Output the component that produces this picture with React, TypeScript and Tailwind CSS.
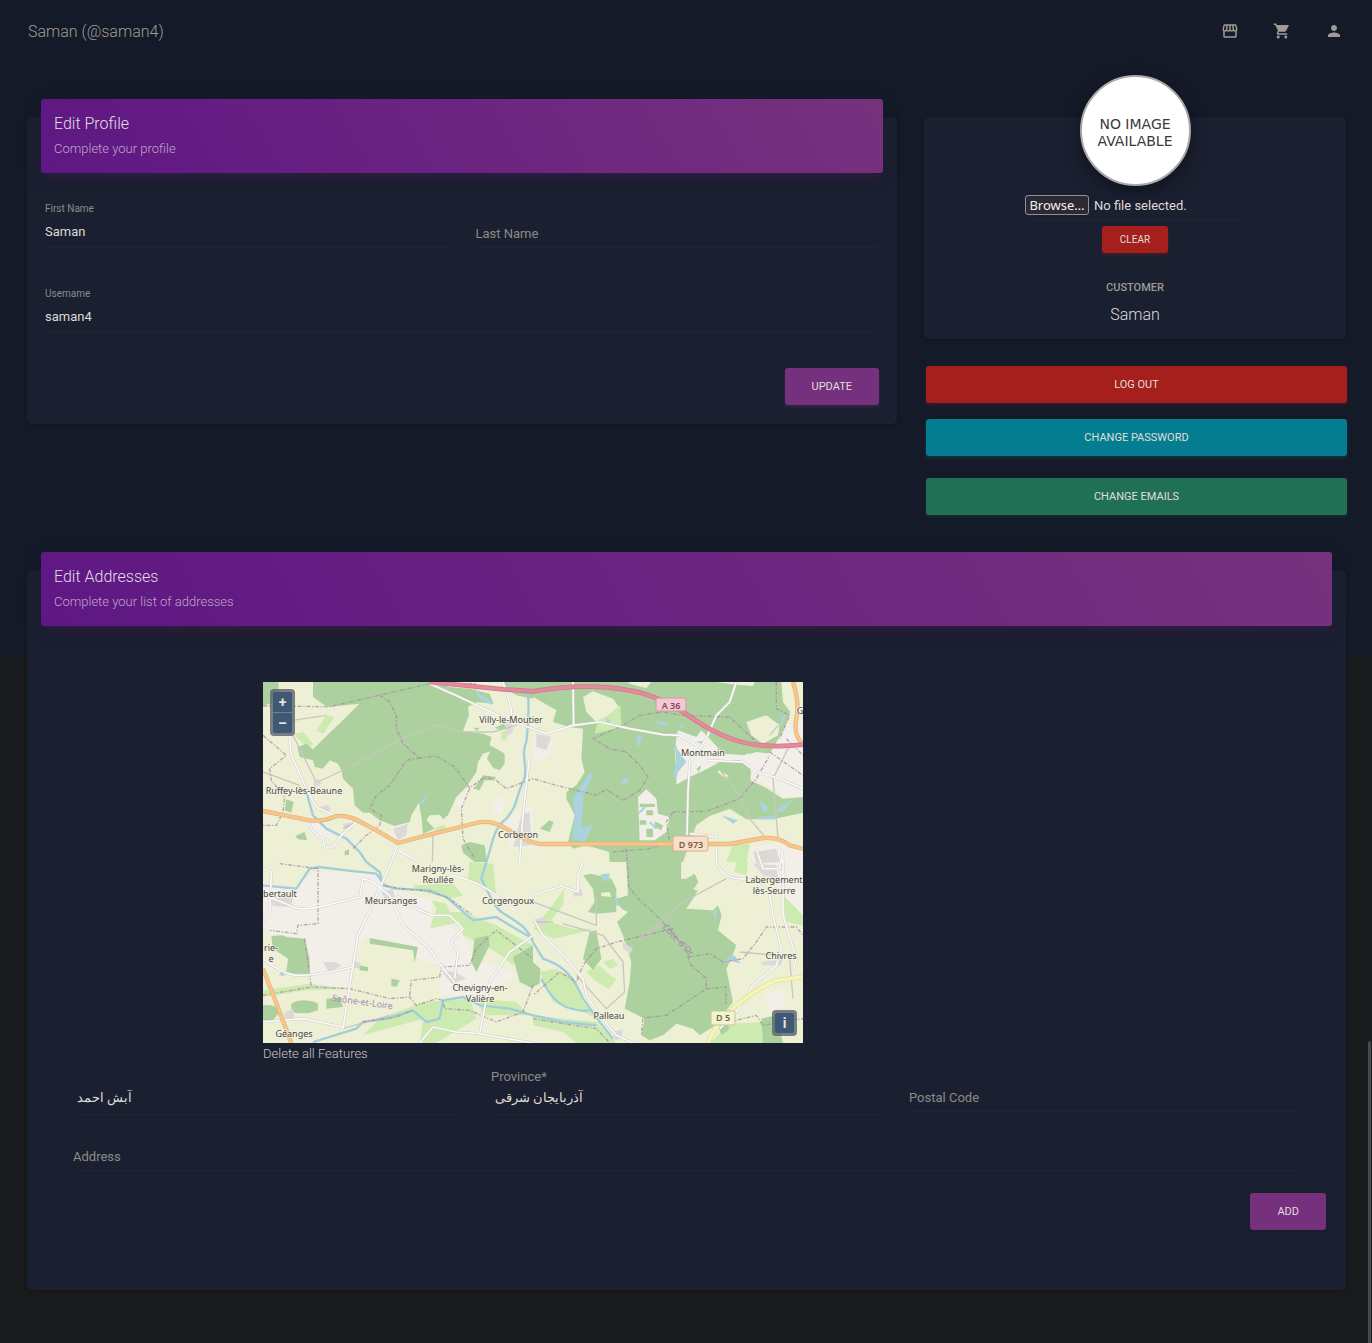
import React from 'react';
import { MdOutlineStorefront, MdPerson, MdShoppingCart } from 'react-icons/md';

function CardHeader({ title, subtitle }: { title: string; subtitle: string }) {
  return (
    <header className="mx-[14px] -mt-[18px] h-[74px] rounded-[3px] bg-[linear-gradient(60deg,#5f1784,#76327d)] px-[13px] pt-[14px] shadow-[0_4px_20px_rgba(0,0,0,0.14),0_7px_10px_-5px_rgba(122,30,138,0.4)]">
      <h4 className="text-[16px] leading-[22px] font-light text-[#e3dfe5]">{title}</h4>
      <p className="mt-[4px] text-[13px] leading-[20px] font-light text-[#c0a6c9]">{subtitle}</p>
    </header>
  );
}

function Card({ className = '', children }: { className?: string; children: React.ReactNode }) {
  return (
    <section className={`rounded-[5px] bg-[#1b2031] shadow-[0_1px_4px_rgba(0,0,0,0.2)] ${className}`}>{children}</section>
  );
}

function WideButton({ className, children }: { className: string; children: React.ReactNode }) {
  return (
    <button type="button" className={`h-[37px] w-full rounded-[3px] pt-[2px] text-[11px] text-[#e0dedb] uppercase ${className}`}>
      {children}
    </button>
  );
}

const field = 'w-full border-b border-[#1f2538] bg-transparent text-[13px] text-[#dedbd7] outline-none';

type LabelSpec = { x: number; y: number; lines: string[] };

const places: LabelSpec[] = [
  { x: 248, y: 41, lines: ['Villy-le-Moutier'] },
  { x: 440, y: 74, lines: ['Montmain'] },
  { x: 41, y: 112, lines: ['Ruffey-lès-Beaune'] },
  { x: 255, y: 156, lines: ['Corberon'] },
  { x: 175, y: 190, lines: ['Marigny-lès-', 'Reullée'] },
  { x: 128, y: 222, lines: ['Meursanges'] },
  { x: 245, y: 222, lines: ['Corgengoux'] },
  { x: 511, y: 201, lines: ['Labergement', 'lès-Seurre'] },
  { x: 17, y: 215, lines: ['bertault'] },
  { x: 8, y: 269, lines: ['rie-', 'e'] },
  { x: 518, y: 277, lines: ['Chivres'] },
  { x: 217, y: 309, lines: ['Chevigny-en-', 'Valière'] },
  { x: 346, y: 337, lines: ['Palleau'] },
  { x: 31, y: 355, lines: ['Géanges'] },
  { x: 537, y: 32, lines: ['G'] },
];

const forest = [
  'M0 0H47V60L20 66 0 70Z',
  'M150 0H500L560 15 620 20 680 35 692 65 640 60 615 75 618 100 600 147 660 155 685 165 680 190 700 200 725 215 725 245 710 265 690 257 672 230 682 208 660 215 645 240 640 270 610 315 580 345 555 400 540 412 530 398 500 400 490 415 515 440 480 455 476 410 468 362 445 400 440 420 395 432 350 415 320 392 300 392 275 370 270 320 240 290 235 265 225 245 200 235 180 260 155 255 150 235 110 225 103 195 130 185 150 202 290 65 200 74 185 70 150 45Z',
  'M720 0H810V50L760 40 720 15Z',
  'M70 352L92 360 85 392 65 385Z M97 462L125 450 132 475 105 472Z M595 490L620 480 665 490 672 540H635L600 512Z M245 508L258 502 258 518 245 520Z',
  'M640 310L660 280 700 285 690 295 665 295 650 325 630 320Z M632 137L650 137 640 147Z M695 137L720 125 735 135 710 145Z',
  'M810 0H1555L1560 60 1582 90 1550 175 1550 205 1510 215 1450 215 1430 235 1465 260 1462 295 1510 318 1560 350 1620 345V392L1530 412 1450 412 1400 380 1340 402 1300 430 1290 455 1255 470 1254 620 1305 625 1290 650 1270 680 1350 685 1365 670 1376 700 1365 745 1420 790 1405 830 1390 860 1410 960 1350 1035 1310 1060 1290 1040 1240 1025 1200 1060 1160 1075 1135 1060 1145 1010 1085 980 1100 900 1105 840 1080 760 1062 720 1095 690 1075 680 1060 650 1095 640 1090 540H1040L1038 510 970 490 930 500 915 480 935 400 910 350 910 330 940 310 965 270 955 230 960 140 920 135 870 120 880 85 820 50 810 45Z',
  'M25 762L60 760 70 765 125 770 140 830 140 875 100 882 70 870 75 830 30 800Z',
  'M85 965Q120 945 165 965V985Q130 1000 85 990Z M190 950L230 945 240 975 190 980Z M0 970Q40 965 50 990L30 1015 0 1015Z',
  'M320 768L465 795 455 842 450 805 320 785Z M288 850L315 855V868L290 865Z M385 890L410 895 400 915 385 912Z',
  'M635 770L675 760 680 790 640 870 625 840Z M750 825L810 790V920L770 900Z M810 840L832 860 830 905 810 915Z',
  'M985 575L1045 590 1060 620 1060 690 1000 695 975 690 995 660 990 620 960 580Z M980 750L1000 745 1015 830 990 865 960 830Z',
  'M1495 1010L1540 1000 1560 1083H1500Z M1365 1030L1390 1020 1400 1040 1375 1060Z M830 440L860 415 872 420 860 450Z',
  'M1250 540V470L1290 455 1260 540Z M1254 540L1250 620 1290 625 1306 600 1295 575 1270 590 1252 590Z',
];

const farmland = [
  'M960 45L990 28 1050 50 1072 80 1040 110 1000 120 970 90Z',
  'M1450 120L1510 100 1550 130 1545 160 1500 185 1465 160Z',
  'M1095 0H1165L1150 18 1100 5Z M1360 0H1475L1470 12 1420 8Z',
  'M1405 590L1420 645 1360 660Z',
  'M1015 632L1040 630 1045 645 1015 642Z',
  'M1365 265L1395 280 1390 290 1365 272Z',
];

const built = [
  'M1245 145L1300 165 1315 145 1340 170 1380 215 1450 220 1480 210 1520 215 1570 130 1620 110V345L1560 345 1530 320 1470 292 1460 255 1430 235 1370 240 1330 262 1280 285 1240 308 1240 260 1235 200Z',
  'M0 600L90 620 150 570 340 575 380 620 470 645 510 655 500 720 560 730 600 760 640 840 700 850 760 880 660 940H530V850L470 830 420 790 300 765 270 860 260 915H140L130 770 20 755 0 730Z',
  'M700 345L725 340 715 400 690 390Z M760 390L810 370V500L740 500 720 430Z M385 435L440 415 435 470 380 465Z M570 370L605 330 600 375Z',
  'M1125 345L1150 322 1180 350 1185 395 1220 405 1210 450 1175 475 1130 475Z',
  'M1450 500L1560 480 1620 510V700L1560 670 1540 600 1490 560Z M1505 940L1560 920 1570 970 1520 985Z',
  'M810 150L870 160 860 220 810 240Z M130 425L185 420 220 470 150 460Z M560 850H620V930H540Z',
];

const meadow = [
  'M190 100L215 105 180 155 160 145Z M95 155L120 150 150 185 135 200 100 165Z M715 150L735 145 730 175 715 175Z',
  'M1072 70L1075 135 995 155 1005 115 1035 100Z M520 435L545 430 550 440 515 455Z M1410 490L1460 485 1450 540H1390Z',
  'M505 655L550 665 560 690 600 690 700 730 810 790 750 850 700 810 600 760 590 720 500 740 520 680Z M620 540L690 545 700 640 660 620 615 590Z M450 610L570 605 600 640 560 650 460 625Z',
  'M640 950L760 960 800 1000 660 1000Z M0 925L140 905 260 920 130 925 0 945Z',
  'M860 680L890 640 905 620 900 670 860 720 930 740 1000 740 870 770 810 740Z M830 870L880 860 930 890 960 960 1000 1010 940 980 870 960Z M810 1000L1000 1020 1060 1083H940L900 1050 810 1030Z',
  'M970 870L1010 850 1040 880 1060 890 1040 920 1000 900Z M1020 840L1050 830 1065 850 1040 860Z M1560 640L1620 700V730L1570 720Z',
  'M350 1010L480 960 620 950 640 1010 520 1083H470L480 1010 300 1060Z M1400 1025L1500 1020 1500 1083H1340Z M1420 540H1455L1450 580 1415 570Z',
];

const water = [
  'M980 272L990 278 962 340 958 400 955 440 992 425 965 480 928 470 935 400 930 350Z',
  'M1122 160L1138 162 1130 192 1122 190Z M1180 115L1215 125 1210 135 1182 122Z M1233 165L1242 200 1270 240 1245 270 1240 290 1230 280 1240 240Z M1075 292L1095 285 1092 305 1078 305Z M1250 130L1265 122 1260 137Z',
  'M1375 400L1425 415 1410 425Z M1490 355L1515 375 1510 392 1495 380Z M1480 405L1545 398 1535 412 1490 412Z M1300 178L1325 178 1318 188Z M1540 385L1590 350 1560 390Z M1570 90L1560 120 1545 140 1560 100Z',
  'M1013 577L1040 575 1038 595 1020 598Z M1053 628L1068 665 1072 675 1060 670Z M1350 685L1360 680 1362 710 1352 705Z M1370 840L1415 820 1432 845 1400 835 1365 845Z',
  'M630 15L655 40 690 60 685 68 650 50Z M495 335L480 365 470 360Z M1030 108L1042 115 1035 130Z M48 880L58 865 65 882Z',
];

const rivers = [
  'M795 30Q800 100 790 180C770 220 800 260 780 300C760 340 765 370 730 410C690 440 690 480 670 540L655 590C680 640 690 670 715 690C760 720 790 730 810 780L840 830C900 850 930 880 960 950L1010 1020 1050 1070',
  'M130 330L150 400 190 440 250 470 290 510 310 540 350 570 360 610 400 620 500 625 550 645 590 680 630 715 700 705 740 730 810 770',
  'M0 610L100 620 140 560 170 555 250 565 340 575 365 610',
  'M150 1080L280 1040 300 1020 370 1010 450 985 490 1020 530 1010 540 955 600 945 650 970 740 980 810 1000 900 1020 1000 1030',
  'M835 890Q870 960 910 975T980 985',
];

const borders = [
  'M0 72L200 74 500 5 640 5',
  'M350 40L380 60 400 100 400 140 420 185 470 228 520 222 575 255 620 318 665 285 700 295 730 320 810 290 880 310 1000 340 1030 322 1080 355 1130 325 1155 285 1130 250 1090 210 1040 200 990 170 1080 130 1130 100 1200 90 1260 100 1400 105 1480 180',
  'M470 228L430 235 380 310 340 340 320 380 355 400 350 430 310 460 270 500',
  'M620 320L595 380 600 470 635 530',
  'M0 160L70 220 20 260 25 295 65 345 60 390 40 430 0 430',
  'M50 545L165 560 165 725 105 730 100 755 20 745',
  'M125 770L145 915 260 920 380 950 440 945 460 970 520 950 540 955 545 980 620 985 700 1020 780 990 810 910',
  'M0 940L145 915M440 940L445 895 530 885 535 855 620 850 640 800 700 745 810 830',
  'M1090 500L1098 615 1125 650 1190 710 1270 800 1280 845 1330 890 1330 920 1210 1000 1140 1008 1135 1060',
  'M1230 740L1060 780 1000 800 960 850 940 900 890 870 810 940',
  'M1230 390L1210 420 1220 480 1160 500 1050 510M1230 390L1330 388 1430 350 1480 290 1520 220',
  'M1275 825L1340 815 1380 840 1440 830 1480 780 1510 735 1600 735 1620 760',
  'M1330 920L1390 915 1388 965M1400 1020L1480 1000 1500 1030 1620 1010',
  'M300 1020L400 1005 450 985M810 1010L900 1025 1000 1040 1040 1083',
  'M365 610L400 618 500 628 560 650 600 680 630 700',
  'M1540 0V80L1580 100 1550 170M1520 210L1620 280M1570 170L1620 220',
];

const minorRoads = [
  'M500 5Q580 40 600 50T740 115L850 155 930 130 1010 120 1100 140 1200 158 1250 160 1300 190',
  'M720 0L745 80 745 110M930 0L932 130M1420 0L1400 60 1360 100 1330 170 1310 200 1280 240 1275 330 1272 460',
  'M90 90Q75 170 85 220L130 320 160 375 210 400M135 420Q150 460 180 470L185 495 210 495 235 460 285 415',
  'M405 485L385 540 350 620 285 760 265 880 240 1040M405 505L460 535M800 220L780 400 770 540',
  'M0 560L25 570 20 700 0 720M0 640Q60 660 90 675T210 665L290 645 300 590 330 600 380 640 420 730 500 800 540 860 575 900',
  'M400 640Q470 690 510 700L560 700 600 740 565 780 585 810 575 890',
  'M0 830Q60 880 110 880T270 855M0 1020L120 1010 240 1035',
  'M810 760L740 810 680 900 650 1055M570 580Q650 600 700 640L760 690M470 1083L510 1035 580 1050 650 1055 810 1083',
  'M810 710L840 760 900 820 960 890 970 940 1010 1000 1060 1060 1110 1083M810 640L895 612 945 630 945 580 960 540',
  'M1360 540Q1380 590 1430 590T1520 640L1530 700 1555 800 1540 850 1470 910 1420 990 1370 1040',
  'M1560 530L1560 700 1600 830 1590 870M1480 500L1500 560 1550 560 1560 500',
  'M1330 235L1440 240 1480 270 1550 290 1620 320M1280 455L1360 465 1360 540',
];

const tracks = [
  'M165 300L260 255 410 175 520 128 600 150 690 150 760 130',
  'M90 115L190 100M90 160L160 300M240 440L290 415M510 460L508 540M0 270L110 310',
  'M1375 270L1430 340 1460 410 1510 470M1580 190L1530 290 1545 470',
  'M1390 590L1260 660 1130 770M900 725L1020 760 1080 840 1085 930 1030 980 940 880M810 660L1000 730 1000 640M1520 160L1545 130',
  'M810 720L870 720M1140 770L1230 700M240 1040L380 1000M1580 830L1590 950M1430 810L1540 820',
];

function Paths({ list, ...props }: { list: string[] } & React.SVGProps<SVGGElement>) {
  return (
    <g {...props}>
      {list.map((d) => (
        <path key={d} d={d} />
      ))}
    </g>
  );
}

const motorway = 'M500 0L640 14 720 22 810 28Q900 12 990 14C1110 18 1180 40 1260 90C1350 150 1430 210 1620 188';
const primary = 'M0 387L140 415Q180 420 220 402C270 400 290 420 340 445L405 483 500 458 640 423Q680 412 720 435L800 478 830 486H1400L1500 468Q1550 465 1580 490L1620 500';
const secondary = 'M1335 1083Q1360 1020 1420 970T1540 895L1620 885';
const sideRoads = 'M0 860L35 950 85 1083M1590 0Q1610 60 1600 110T1620 185';

function RegionMap() {
  return (
    <svg viewBox="0 0 540 361" className="block h-full w-full" role="img" aria-label="Map around Corberon">
      <rect width="540" height="361" fill="#eef0d5" />
      <g transform="scale(0.33333)" strokeLinejoin="round">
        <Paths list={built} fill="#f2efe9" />
        <Paths list={meadow} fill="#cdebb0" />
        <Paths list={forest} fill="#add19e" />
        <Paths list={farmland} fill="#eef0d5" />
        <Paths list={[built[0], built[3]]} fill="#f2efe9" />
        <path d={meadow[1]} fill="#cdebb0" />
        <path d="M1130 365H1175V375H1130ZM1150 385H1170V400H1150ZM1130 415H1150V428H1130ZM1175 418L1200 430 1195 445 1175 435ZM1150 440H1170V465H1150ZM1300 260L1315 250 1308 270Z" fill="#add19e" />
        <path d="M1125 395L1150 372M1160 420L1180 440" stroke="#aad3df" strokeWidth="6" />
        <Paths list={water} fill="#aad3df" />
        <g fill="#dcdad6">
          <path d="M725 120L745 105 750 150 730 165ZM775 400L800 390 805 490 750 495ZM390 440L435 425 430 460 405 475ZM150 300L165 290 175 305 155 318ZM165 375L195 368 205 385 175 390ZM240 425L275 420 265 440 245 440Z" />
          <path d="M20 650L90 645 85 675 30 672ZM180 840L215 840 235 850 200 875ZM270 835L295 845 285 860 268 855ZM535 865L575 870 610 890 565 905ZM355 630L390 620 395 645 370 660ZM65 990L90 980 95 1010 65 1010Z" />
          <path d="M820 155L865 165 850 205 820 195ZM930 635L955 620 960 640 935 645ZM1080 780L1110 800 1100 815 1080 800ZM1050 1050L1080 1040 1075 1070 1055 1075ZM1495 840L1560 830 1555 850 1500 850ZM1470 510L1540 500 1550 540 1480 545ZM1470 545L1540 550 1545 590 1500 580ZM810 715L840 705 850 730 815 730Z" />
        </g>
        <Paths list={rivers} fill="none" stroke="#a0cedb" strokeWidth="7" />
        <Paths list={tracks} fill="none" stroke="#c9c6c1" strokeWidth="4" />
        <Paths list={borders} fill="none" stroke="#a58ba3" strokeWidth="4" strokeDasharray="12 5 4 5" opacity="0.75" />
        <Paths list={minorRoads} fill="none" stroke="#cfccc7" strokeWidth="8" />
        <Paths list={minorRoads} fill="none" stroke="#fbfbfa" strokeWidth="5" />
        <g fill="none">
          <path d={secondary} stroke="#dcdb98" strokeWidth="14" />
          <path d={secondary} stroke="#f4f5b6" strokeWidth="11" />
          <path d={primary} stroke="#e5b274" strokeWidth="13" />
          <path d={primary} stroke="#f7c68c" strokeWidth="9" />
          <path d={sideRoads} stroke="#e5b274" strokeWidth="13" />
          <path d={sideRoads} stroke="#f7c68c" strokeWidth="9" />
          <path d={motorway} stroke="#d67488" strokeWidth="14" />
          <path d={motorway} stroke="#e28b9e" strokeWidth="10" />
        </g>
      </g>
      <g strokeWidth="1">
        <rect x="393" y="16" width="30" height="13" rx="2" fill="#f0c9d2" stroke="#dd93a4" />
        <rect x="410" y="154" width="35" height="15" rx="2" fill="#f7e0ca" stroke="#d9b08d" />
        <rect x="448" y="329" width="24" height="14" rx="2" fill="#f3f2d3" stroke="#c9c790" />
      </g>
      <g fontFamily='"Noto Sans", sans-serif' textAnchor="middle" fontSize="9">
        <g fontWeight="600">
          <text x="408" y="27" fill="#8c4157">A 36</text>
          <text x="428" y="166" fill="#7b5a43">D 973</text>
          <text x="460" y="339" fill="#6c6b38">D 5</text>
        </g>
        <g fill="#a58bb2">
          <text transform="translate(99 323) rotate(8)">Saône-et-Loire</text>
          <text transform="translate(413 260) rotate(46)">Côte-d'Or</text>
        </g>
        <g fill="#464646" stroke="#f5f4e6" strokeWidth="2" strokeOpacity="0.7" paintOrder="stroke">
          {places.map((p) => (
            <text key={p.lines[0]} x={p.x} y={p.y}>
              {p.lines.map((line, i) => (
                <tspan key={line} x={p.x} dy={i ? 11 : 0}>
                  {line}
                </tspan>
              ))}
            </text>
          ))}
        </g>
      </g>
    </svg>
  );
}

const mapButton = 'flex h-[20px] w-[19px] items-center justify-center bg-[#3e5876] text-[14px] leading-none font-bold text-[#e6e4e0]';

export default function App() {
  return (
    <div className="relative min-h-screen bg-[#191a1b] bg-[linear-gradient(#151a29,#151a29)] bg-[length:100%_657px] bg-no-repeat pb-[53px] font-[Roboto,'Noto_Sans',sans-serif] text-[13px] text-[#dedbd7]">
      <nav className="flex h-[62px] items-center justify-between pr-[29px] pl-[28px]">
        <a href="#profile" className="pt-[2px] text-[16px] font-light text-[#a09b93]">Saman (@saman4)</a>
        <div className="flex gap-[34px] text-[18px] text-[#a09b93]">
          <button type="button" aria-label="Store"><MdOutlineStorefront /></button>
          <button type="button" aria-label="Cart"><MdShoppingCart /></button>
          <button type="button" aria-label="Account"><MdPerson /></button>
        </div>
      </nav>

      <main className="pt-[55px] pr-[26px] pl-[27px]">
        <div className="grid grid-cols-[870fr_422fr] items-start gap-[27px]">
          <Card className="h-[307px]">
            <CardHeader title="Edit Profile" subtitle="Complete your profile" />
            <form id="profile" className="px-[18px] pt-[30px]">
              <div className="grid grid-cols-2 gap-[27px]">
                <div>
                  <label htmlFor="first" className="block text-[10px] leading-[12px] text-[#8e8a85]">First Name</label>
                  <input id="first" defaultValue="Saman" className={`${field} h-[33px] pt-px`} />
                </div>
                <div className="pt-[12px]">
                  <input id="last" aria-label="Last Name" placeholder="Last Name" className={`${field} h-[33px] pt-[4px] placeholder:text-[#8e8a85]`} />
                </div>
              </div>
              <div className="mt-[40px]">
                <label htmlFor="user" className="block text-[10px] leading-[12px] text-[#8e8a85]">Username</label>
                <input id="user" defaultValue="saman4" className={`${field} h-[33px] pt-px`} />
              </div>
              <div className="mt-[35px] flex justify-end">
                <button type="button" className="h-[37px] rounded-[3px] bg-[#75317d] px-[27px] pt-[2px] text-[11px] text-[#e0dedb] uppercase shadow-[0_2px_3px_rgba(117,49,125,0.3)]">Update</button>
              </div>
            </form>
          </Card>

          <div>
            <Card className="flex h-[222px] flex-col items-center">
              <div className="-mt-[42px] flex h-[111px] w-[111px] shrink-0 items-center justify-center rounded-full border-2 border-[#a9a9a9] bg-white pt-[4px] text-center font-['DejaVu_Sans',sans-serif] text-[14px] leading-[17px] text-[#3a3a3a] shadow-[0_6px_16px_2px_rgba(0,0,0,0.35)]">
                NO IMAGE<br />AVAILABLE
              </div>
              <label className="mt-[9px] flex h-[25px] w-[220px] gap-[5px] border-b border-[#1f2538] leading-[22px]">
                <input type="file" className="sr-only" />
                <span className="h-[20px] w-[64px] rounded-[3px] border border-[#8f8f9d] bg-[#2b2a33] text-center font-['Noto_Sans',sans-serif] text-[13px] leading-[18px] text-[#f2f1ee]">Browse…</span>
                <span>No file selected.</span>
              </label>
              <button type="button" className="mt-[6px] h-[27px] rounded-[3px] bg-[#a5201d] px-[18px] text-[10px] text-[#e0dedb] uppercase shadow-[0_2px_3px_rgba(165,32,29,0.25)]">Clear</button>
              <h6 className="mt-[27px] text-[11px] leading-[16px] font-medium text-[#a09b93]">CUSTOMER</h6>
              <h4 className="mt-[8px] text-[16px] leading-[22px] font-light">Saman</h4>
            </Card>
            <div className="-mr-px ml-0.5 pt-[27px]">
              <WideButton className="bg-[#a5201d] shadow-[0_2px_3px_rgba(165,32,29,0.25)]">Log out</WideButton>
              <WideButton className="mt-[16px] bg-[#037d8f] shadow-[0_2px_3px_rgba(3,125,143,0.25)]">Change password</WideButton>
              <WideButton className="mt-[22px] bg-[#207055] shadow-[0_2px_3px_rgba(32,112,85,0.25)]">Change emails</WideButton>
            </div>
          </div>
        </div>

        <Card className="mt-[55px] flow-root h-[720px]">
          <CardHeader title="Edit Addresses" subtitle="Complete your list of addresses" />
          <form className="pt-[56px] pr-[20px] pl-[46px]">
            <div className="ml-[190px] w-[540px]">
              <div className="relative h-[361px] overflow-hidden">
                <RegionMap />
                <div className="absolute top-[7px] left-[7px] flex flex-col gap-px rounded-[4px] bg-[#59636a]/80 p-[3px]">
                  <button type="button" aria-label="Zoom in" className={`${mapButton} rounded-t-[2px]`}>+</button>
                  <button type="button" aria-label="Zoom out" className={`${mapButton} rounded-b-[2px]`}>–</button>
                </div>
                <div className="absolute right-[6px] bottom-[7px] rounded-[4px] bg-[#59636a]/80 p-[3px]">
                  <button type="button" aria-label="Attributions" className={`${mapButton} rounded-[2px]`}>i</button>
                </div>
              </div>
              <button type="button" className="block text-[13px] leading-[22px] font-light text-[#c9c6c2]">Delete all Features</button>
            </div>
            <div className="mt-[2px] mr-[27px] grid h-[48px] grid-cols-3 items-start gap-[28px]">
              <div className="pt-[20px]">
                <select aria-label="City" className={`${field} h-[28px] appearance-none px-[4px] pb-[6px]`}>
                  <option>آبش احمد</option>
                </select>
              </div>
              <div>
                <label htmlFor="province" className="block leading-[20px] text-[#8e8a85]">Province*</label>
                <select id="province" className={`${field} h-[28px] appearance-none px-[4px] pb-[6px]`}>
                  <option>آذربایجان شرقی</option>
                </select>
              </div>
              <div className="pt-[16px]">
                <input aria-label="Postal Code" placeholder="Postal Code" className={`${field} h-[29px] placeholder:text-[#8e8a85]`} />
              </div>
            </div>
            <div className="mt-[27px] mr-[27px]">
              <input aria-label="Address" placeholder="Address" className={`${field} h-[29px] placeholder:text-[#8e8a85]`} />
            </div>
            <div className="mt-[22px] flex justify-end">
              <button type="button" className="h-[37px] rounded-[3px] bg-[#75317d] px-[27px] pt-[2px] text-[11px] text-[#e0dedb] uppercase shadow-[0_2px_3px_rgba(0,0,0,0.2)]">Add</button>
            </div>
          </form>
        </Card>
      </main>
      <div className="absolute right-px bottom-0 h-[302px] w-[3px] rounded-t-full bg-[#454a4b]" />
    </div>
  );
}
